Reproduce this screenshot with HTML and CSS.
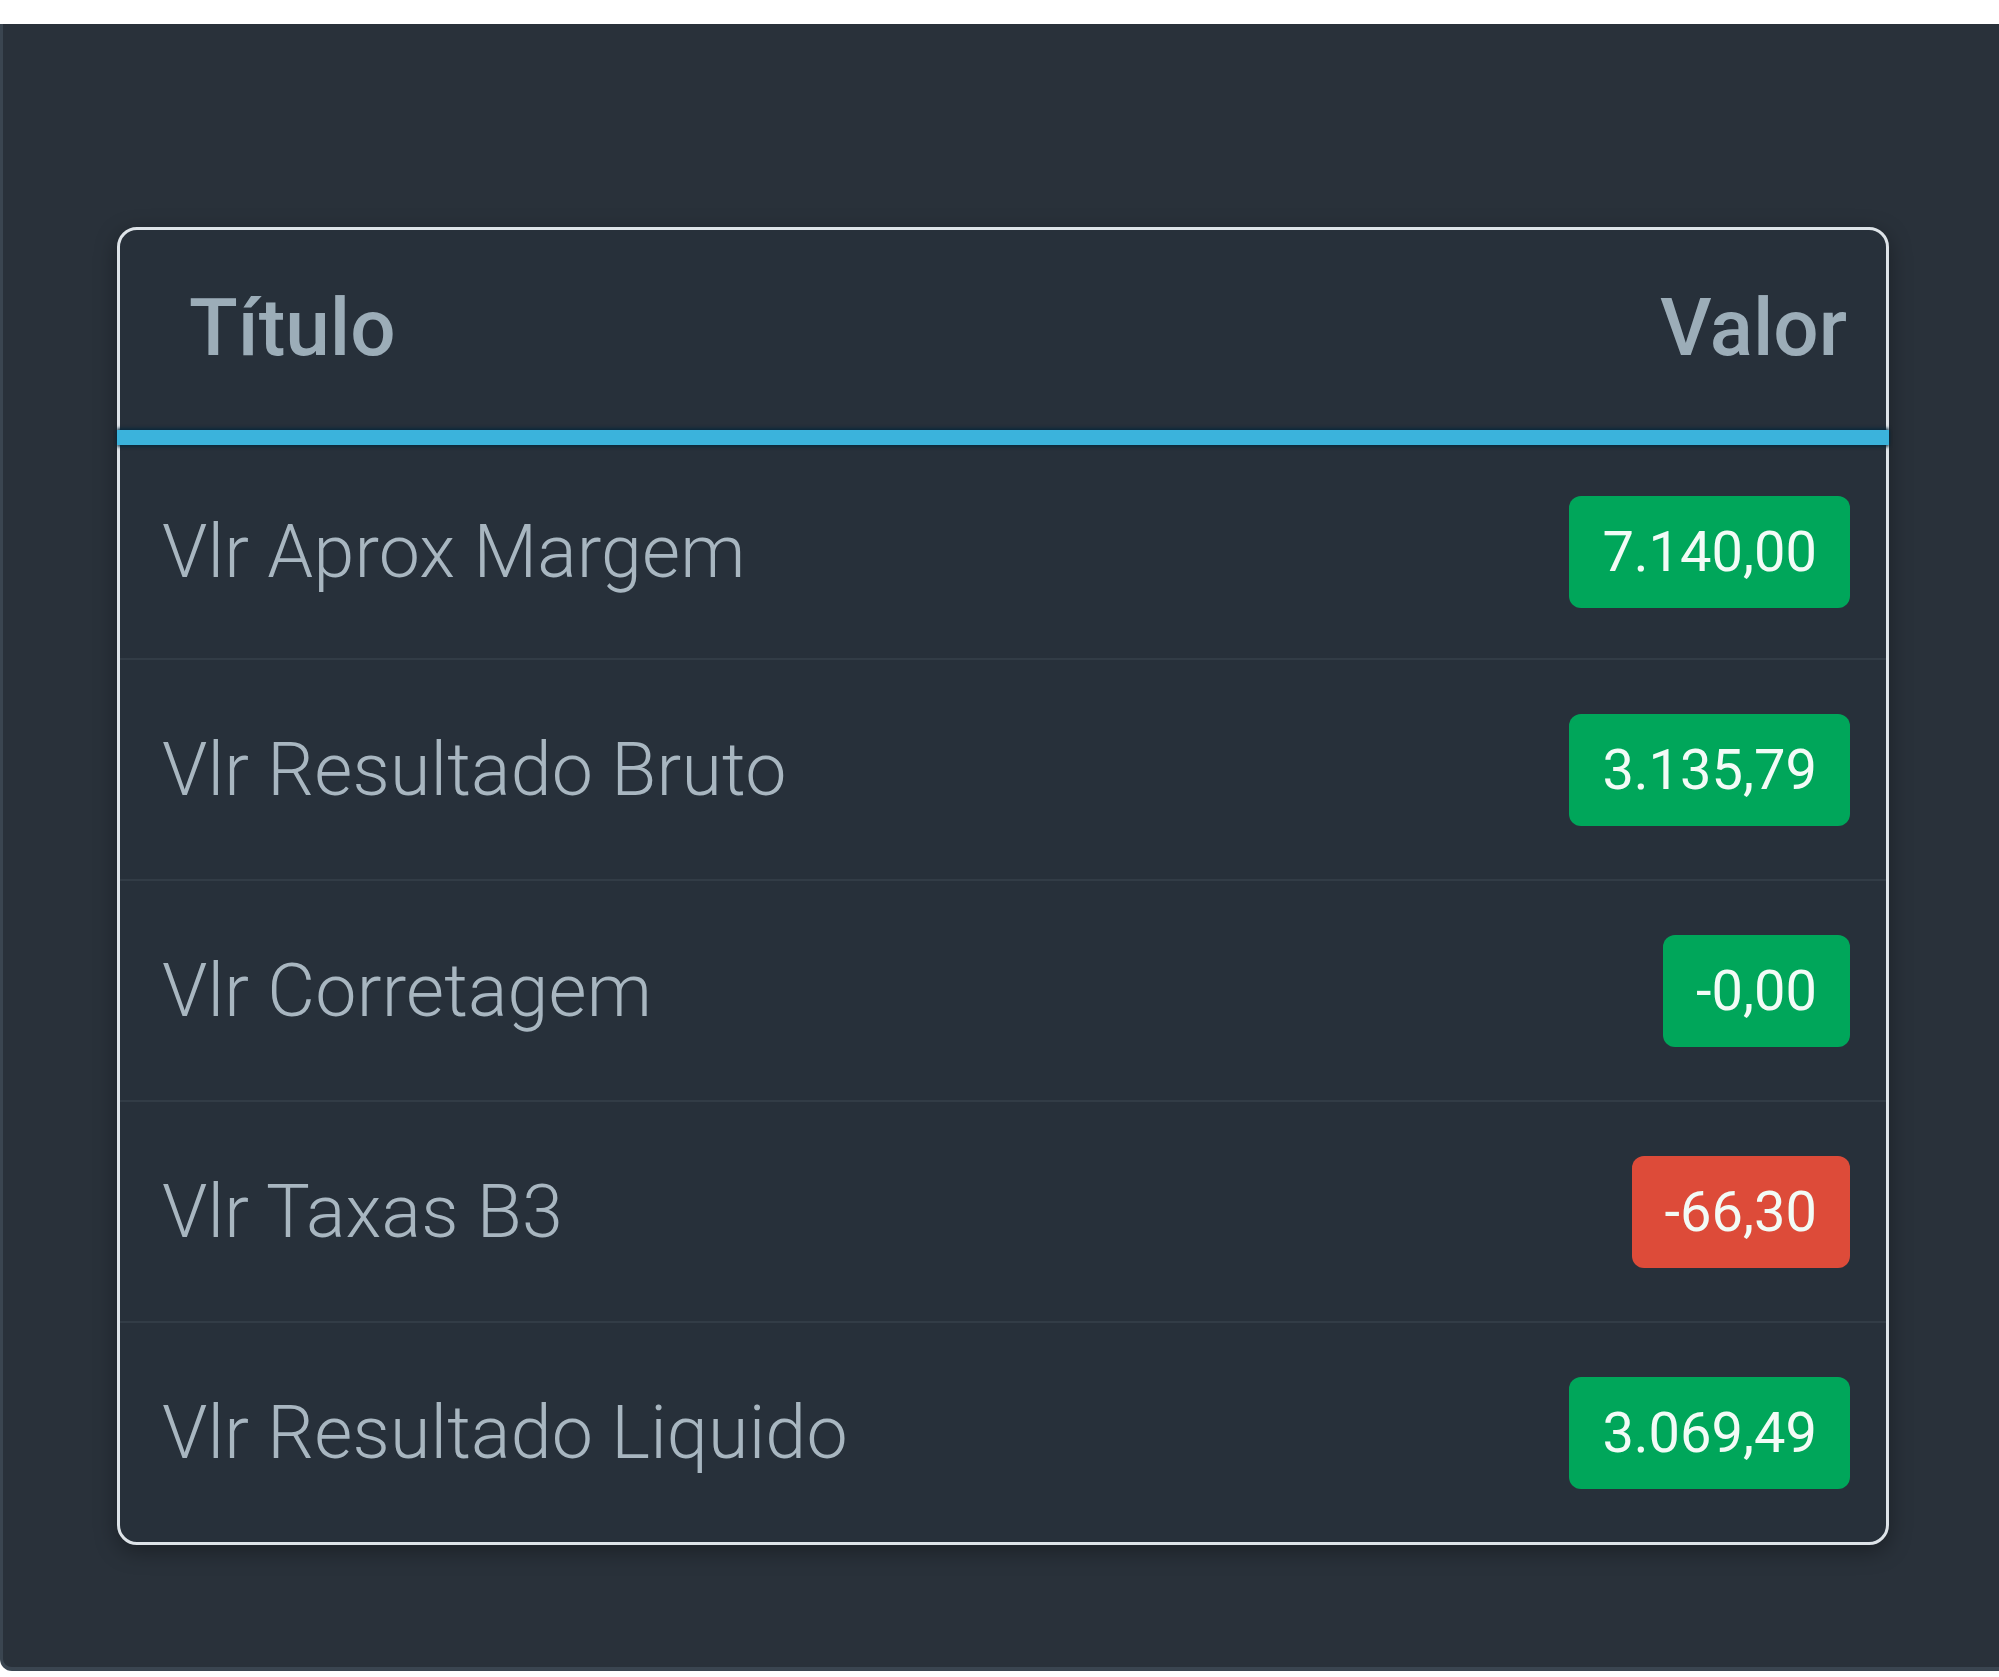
FILE: index.html
```html
<!DOCTYPE html>
<html lang="pt-BR">
<head>
<meta charset="utf-8">
<title>Resultado</title>
<link rel="stylesheet" href="styles.css">
</head>
<body>
<div class="panel">
  <div class="card">
    <div class="head">
      <span class="head-title">Título</span>
      <span class="head-value">Valor</span>
    </div>
    <div class="rule"></div>
    <div class="rows">
      <div class="row">
        <span class="label">Vlr Aprox Margem</span>
        <span class="badge green">7.140,00</span>
      </div>
      <div class="row">
        <span class="label">Vlr Resultado Bruto</span>
        <span class="badge green">3.135,79</span>
      </div>
      <div class="row">
        <span class="label">Vlr Corretagem</span>
        <span class="badge green">-0,00</span>
      </div>
      <div class="row">
        <span class="label">Vlr Taxas B3</span>
        <span class="badge red">-66,30</span>
      </div>
      <div class="row">
        <span class="label">Vlr Resultado Liquido</span>
        <span class="badge green">3.069,49</span>
      </div>
    </div>
  </div>
</div>
</body>
</html>
```

FILE: styles.css
```css
html, body {
  margin: 0;
  padding: 0;
  background: #ffffff;
}

body {
  font-family: Roboto, "Liberation Sans", Arial, sans-serif;
  padding-top: 24px;
  height: 1677px;
  box-sizing: border-box;
  overflow: hidden;
}

.panel {
  background: #29313a;
  height: 1647px;
  box-sizing: border-box;
  border-left: 3px solid #3a4550;
  border-bottom: 4px solid #3a4550;
  border-bottom-left-radius: 12px;
  padding-top: 203px;
  padding-left: 114px;
}

.card {
  width: 1772px;
  box-sizing: border-box;
  border: 3px solid #dde3e8;
  border-radius: 20px;
  background: #27303a;
  box-shadow: 0 6px 22px rgba(0, 0, 0, 0.35);
}

.head {
  height: 200px;
  display: flex;
  align-items: center;
  justify-content: space-between;
  padding: 0 39px 4px 69px;
  box-sizing: border-box;
  font-size: 80px;
  font-weight: 500;
  color: #9cadb8;
}

.rule {
  height: 15px;
  margin: 0 -3px;
  background: #3bb3dc;
  box-shadow: 0 -2px 3px rgba(5, 40, 60, 0.8), 0 2px 3px rgba(5, 40, 60, 0.8);
}

.row {
  height: 221px;
  box-sizing: border-box;
  border-top: 2px solid #323c46;
  display: flex;
  align-items: center;
  justify-content: space-between;
  padding: 0 36px 0 42px;
}

.row:first-child {
  height: 213px;
  border-top: 0;
}

.label {
  font-size: 73.5px;
  font-weight: 300;
  color: #a8b6c0;
  letter-spacing: 0.2px;
}

.badge {
  height: 112px;
  line-height: 112px;
  padding: 0 33px;
  border-radius: 12px;
  font-size: 56px;
  font-weight: 400;
  color: #f2fbf6;
}

.green {
  background: #00a65a;
}

.red {
  background: #dd4b39;
}
```
